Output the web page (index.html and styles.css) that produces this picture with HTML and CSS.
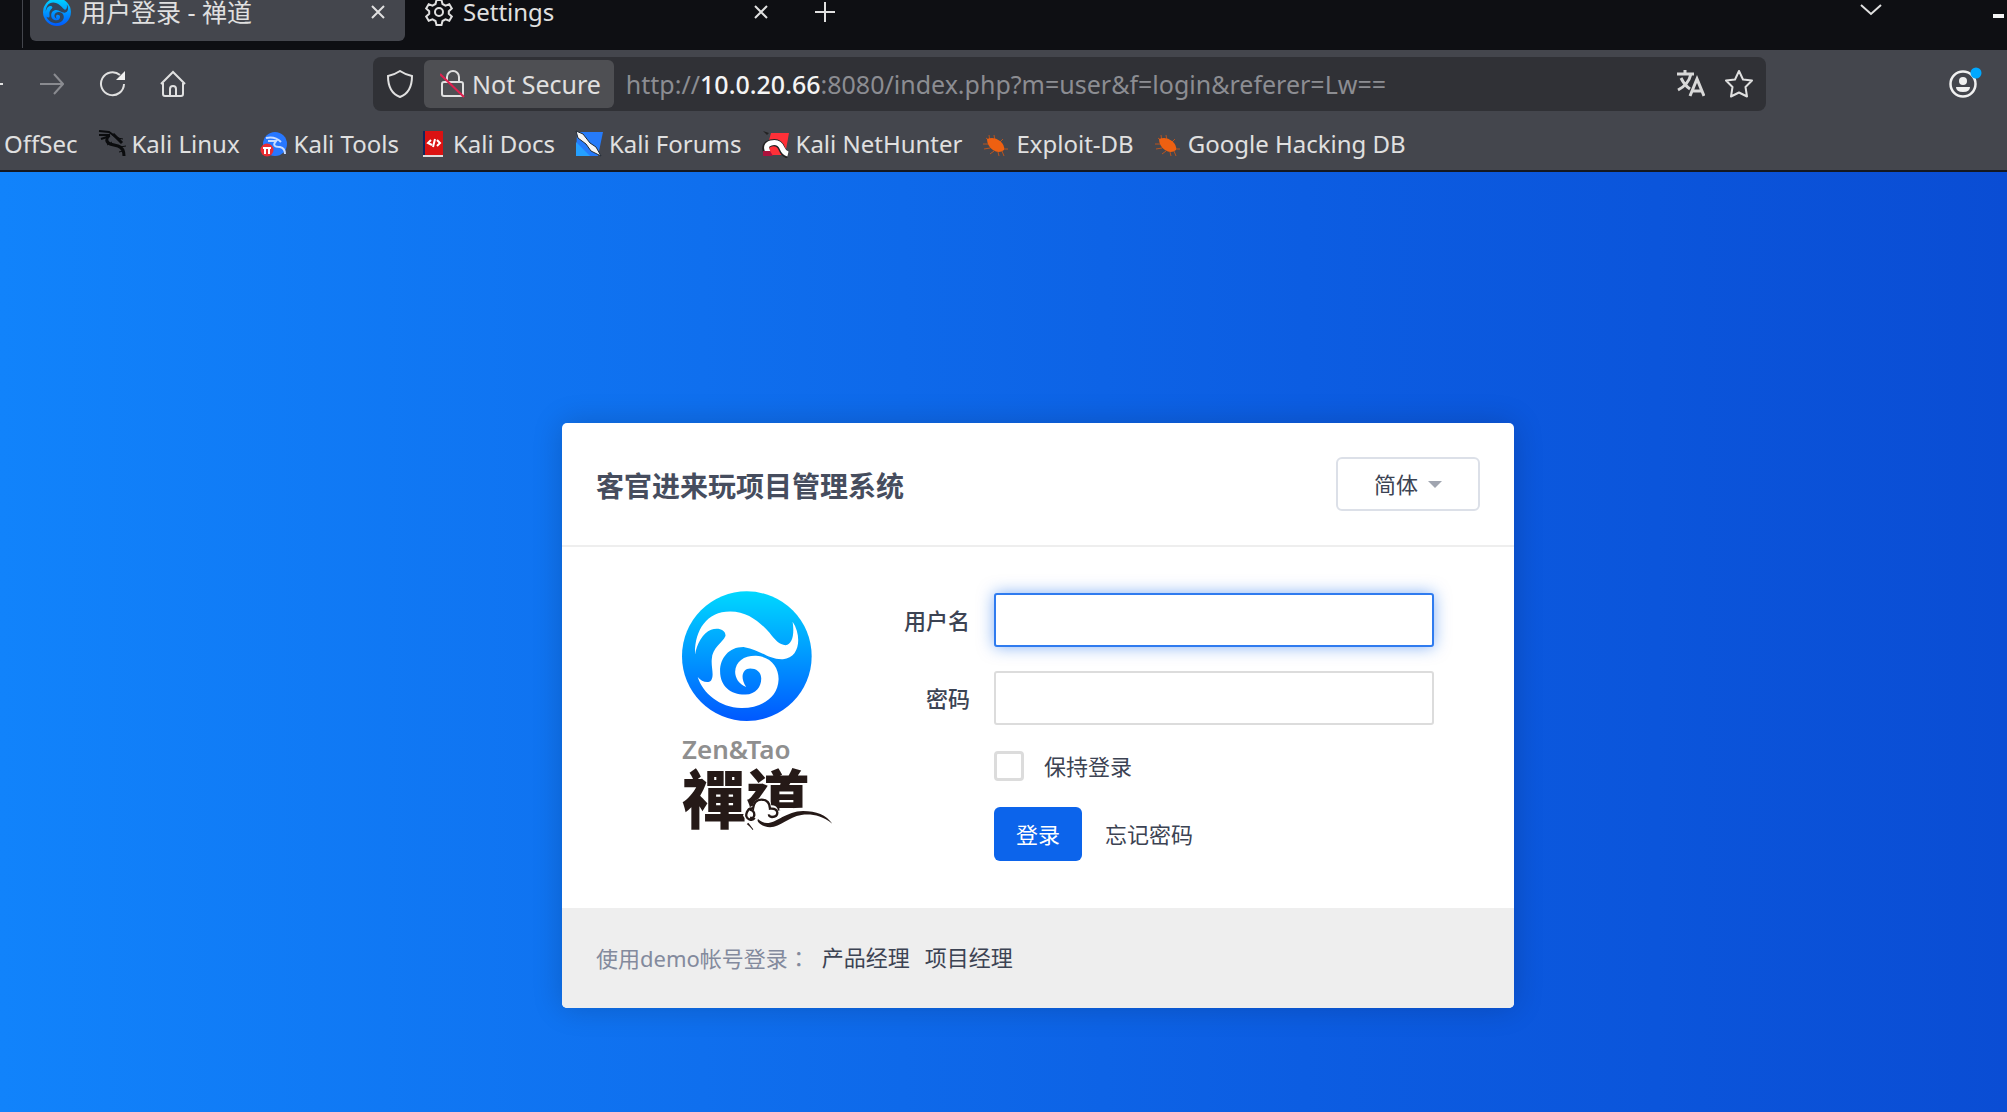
FILE: index.html
```html
<!DOCTYPE html>
<html lang="zh-CN">
<head>
<meta charset="utf-8">
<meta name="viewport" content="width=device-width, initial-scale=1">
<title>用户登录 - 禅道</title>
<link rel="stylesheet" href="styles.css">
</head>
<body>
<svg class="defs" aria-hidden="true">
  <defs>
    <linearGradient id="wave-fill" x1="0" y1="0" x2="0" y2="1">
      <stop offset="0" stop-color="#00d8ff"/>
      <stop offset="1" stop-color="#0058ff"/>
    </linearGradient>
    <path id="wave" d="M107 250C105 180 140 121 212 121C265 121 300 152 330 185C345 205 360 222 378 222C398 220 405 190 399 152C428 195 420 262 370 264C325 266 300 234 255 228C210 226 182 260 182 300C182 345 215 371 258 370C290 368 306 345 305 320C304 302 290 292 272 292C250 292 240 318 260 347C238 340 227 320 227 302C228 270 255 253 290 254C335 256 358 290 357 325C355 380 305 411 245 410C180 408 130 365 115 317C125 330 145 338 155 328C165 312 155 290 157 265C158 230 190 215 198 195C200 175 175 168 155 176C130 185 112 220 107 250Z"/>
    <g id="bug"><path fill="none" stroke="#b9541f" d="M8 12L7 5M13 11l-1-6M17 13l4-4M20 19h6M6 14H1M8 18l-6 1M12 21l-4 3M16 22l1 4M20 21l2 5M4 8l5 4"/><path fill="#ee6011" d="M5 9q7-3 13 2 5 4 4 9-5 4-11 0-6-4-6-11z"/></g>
    <path id="times" d="M1 1L13 13M13 1L1 13"/>
  </defs>
</svg>
<header class="browser">
  <div class="tabs">
    <div class="tab tab-active">
      <svg class="favicon" viewBox="68 60 389 389" aria-hidden="true"><circle cx="262" cy="255" r="194" fill="url(#wave-fill)"/><use href="#wave" fill="#32465c"/></svg>
      <span class="tab-title">用户登录 - 禅道</span>
      <button class="icon-button" aria-label="Close tab"><svg width="14" height="14" class="line"><use href="#times"/></svg></button>
    </div>
    <div class="tab tab-idle">
      <svg class="favicon line" viewBox="0 0 28 28" aria-hidden="true"><circle cx="14" cy="14" r="4"/><path d="M11.5 2h5l1 4 3 1.600 3.800-1.300 2.500 4.200-3 2.800v2.400l3 2.800-2.500 4.200-3.800-1.300-3 1.600-1 4h-5l-1-4-3-1.600-3.800 1.300-2.500-4.200 3-2.800v-2.400l-3-2.800 2.500-4.200 3.800 1.300 3-1.600z"/></svg>
      <span class="tab-title">Settings</span>
      <button class="icon-button" aria-label="Close tab"><svg width="14" height="14" class="line"><use href="#times"/></svg></button>
    </div>
    <button class="icon-button new-tab" aria-label="New tab"><svg width="20" height="20" class="line"><path d="M10 0V20M0 10H20"/></svg></button>
    <button class="icon-button all-tabs" aria-label="List all tabs"><svg width="22" height="12" class="line"><path d="M1 1l10 9 10-9"/></svg></button>
    <button class="icon-button minimize" aria-label="Minimize"><svg width="11" height="4"><path fill="#f4f4f4" d="M0 0h11v4H0z"/></svg></button>
  </div>
  <div class="toolbar">
    <div class="nav">
      <button class="icon-button back" aria-label="Back"><svg width="3" height="28" class="line"><path d="M0 14h3"/></svg></button>
      <button class="icon-button" aria-label="Forward"><svg width="26" height="28" class="line dim"><path d="M2 14H25M16 4l9 10-9 10"/></svg></button>
      <button class="icon-button" aria-label="Reload"><svg width="26" height="28" class="line"><path d="M25 14A11.500 11.500 0 1 1 21 5"/><path fill="#f0f0f0" stroke="none" d="M26 1v9h-9z"/></svg></button>
      <button class="icon-button" aria-label="Home"><svg width="26" height="28" class="line"><path d="M1 14L13 2l12 12M3 13v11q0 2 2 2h16q2 0 2-2V13M10 26v-7q0-3 3-3t3 3v7"/></svg></button>
    </div>
    <div class="urlbar">
      <button class="icon-button" aria-label="Tracking protection"><svg width="26" height="28" class="line"><path d="M13 1q6 4 12 5c0 10-4 18-12 21C5 24 1 16 1 6q6-1 12-5z"/></svg></button>
      <button class="identity">
        <svg width="26" height="28" class="line" aria-hidden="true"><path d="M7 12V7a6 6 0 0 1 12 0v5M5 12h16q2 0 2 2v10q0 2-2 2H4q-2 0-2-2V14q0-2 2-2z"/><path stroke="#e0204f" d="M0 4l24 23"/></svg>
        Not Secure
      </button>
      <div class="address">http://<b>10.0.20.66</b>:8080/index.php?m=user&amp;f=login&amp;referer=Lw==</div>
      <button class="icon-button" aria-label="Translate"><svg width="28" height="28" class="bold-line"><path d="M0 4h17M8 0v4M14 4C12 12 7 17 1 20M4 8c3 6 6 9 9 11M13 26l7-17 7 17M15 21h10"/></svg></button>
      <button class="icon-button" aria-label="Bookmark this page"><svg width="28" height="28" class="line"><path stroke-linejoin="round" d="M14 1l4 8.500 9 1-6.500 6.500 1.500 9.500-8-4-8 4 1.500-9.500L1 10.500l9-1z"/></svg></button>
    </div>
    <button class="icon-button account" aria-label="Account"><svg width="34" height="34"><circle cx="15" cy="17" r="12.500" fill="none" stroke="#f0f0f0" stroke-width="2.500"/><circle cx="15" cy="14" r="4" fill="#f0f0f0"/><path fill="#f0f0f0" d="M8 20h14q0 5-7 5t-7-5z"/><circle cx="28" cy="6" r="5.500" fill="#00a8ff"/></svg></button>
  </div>
  <nav class="bookmarks" aria-label="Bookmarks">
    <a href="#">OffSec</a>
    <a href="#"><svg width="28" height="28"><path fill="none" stroke="#0b0c0e" stroke-width="2" d="M1 1l10 1 11 8M1 5l11 0M3 9l9-3"/><path fill="none" stroke="#0b0c0e" stroke-width="3" d="M11 5q-5 6 1 9l8 2q6 2 6 10M15 4l9 9"/><path fill="none" stroke="#0b0c0e" d="M20 8l5 1M22 17l6-1M21 22l4-1M14 12l-5 3"/></svg>Kali Linux</a>
    <a href="#"><svg width="28" height="28"><circle cx="15" cy="14" r="12" fill="#2777ff"/><path fill="none" stroke="#c9dcff" stroke-width="2" d="M6 8q9-2 15 4M8 11l8 0q-5 6 4 6 5 1 5 7"/><circle cx="7" cy="20" r="6.500" fill="#e92c32"/><path fill="none" stroke="#fff" stroke-width="2" d="M3 18h8M5 18v6M9 18v6"/></svg>Kali Tools</a>
    <a href="#"><svg width="28" height="28"><path fill="#10265c" d="M4 1h3v24H4z"/><path fill="#da1212" d="M6 1h18v24H6z"/><path fill="#ddd" d="M4 25h20v2H4z"/><path fill="none" stroke="#fff" stroke-width="2" d="M12 10l-3 3 4 2M18 10l3 3-3 3M16 9l-2 8"/></svg>Kali Docs</a>
    <a href="#"><svg width="28" height="28"><path fill="#267bfa" d="M2 2h26l-5 24H1z"/><path fill="#25a0ff" d="M1 12l14 14H1z"/><path fill="#f5f5f5" stroke="#222a35" d="M1 1l7 3 7 9 6 4 5 9-10-5-5-7-8-6z"/></svg>Kali Forums</a>
    <a href="#"><svg width="28" height="28"><path fill="#ff3038" d="M9 3h18l-4 22H3z"/><path fill="none" stroke="#222" stroke-width="7" d="M5 23q-4-8 4-10 8-2 11 6 2 5 6 6"/><path fill="none" stroke="#fff" stroke-width="5" d="M6 22q-4-7 3-9 8-2 11 5 2 5 6 6"/><path fill="#aa123c" d="M1 21h7l3 5H1z"/><path fill="#222" d="M1 1l6 2-2 2z"/></svg>Kali NetHunter</a>
    <a href="#"><svg width="28" height="28"><use href="#bug"/></svg>Exploit-DB</a>
    <a href="#"><svg width="28" height="28"><use href="#bug"/></svg>Google Hacking DB</a>
  </nav>
</header>
<main class="page">
  <section class="card">
    <header class="card-header">
      <h1>客官进来玩项目管理系统</h1>
      <button class="language" type="button">简体<span class="caret"></span></button>
    </header>
    <div class="card-body">
      <div class="brand">
        <svg width="130" height="130" viewBox="68 60 389 389" aria-hidden="true"><circle cx="262" cy="255" r="194" fill="url(#wave-fill)"/><use href="#wave" fill="#fff"/></svg>
        <div class="brand-latin">Zen&amp;Tao</div>
        <div class="brand-name" lang="zh-TW">禪道<svg class="cloud" width="90" height="40" viewBox="250 670 270 120" aria-hidden="true"><path fill="#fff" d="M250 738q5-24 28-26q5-26 30-27q26 2 27 22q18 0 20 16q40-12 100-8q35 10 66 26v50H290z"/><g fill="none" stroke="#251917" stroke-width="7"><path d="M285 745q-5 8-16 4q-14-6-7-22q6-14 18-10q3-27 25-27q25 0 26 27q20-2 22 12q0 12-16 13q-10-1-9-8"/><path d="M270 720q14 2 14 16q-2 12-13 8"/></g><path fill="#251917" d="M295 748C335 785 365 725 430 724C470 724 500 736 518 762C485 737 455 732 425 736C380 742 355 784 315 770C300 765 290 755 295 748Z"/></svg></div>
      </div>
      <form class="login">
        <label for="account">用户名</label>
        <input class="field field-current" id="account" type="text" autocomplete="off">
        <label for="password">密码</label>
        <input class="field" id="password" type="password">
        <div class="keep">
          <input id="keep" type="checkbox">
          <label for="keep">保持登录</label>
        </div>
        <div class="actions">
          <button class="submit" type="submit">登录</button>
          <a href="#">忘记密码</a>
        </div>
      </form>
    </div>
    <footer class="card-footer">
      <span class="hint">使用demo帐号登录<span class="colon" lang="zh-TW">：</span></span>
      <a href="#">产品经理</a>
      <a href="#">项目经理</a>
    </footer>
  </section>
</main>
</body>
</html>
```
FILE: styles.css
```css
* { box-sizing: border-box; }

body {
  margin: 0;
  min-height: 100vh;
  display: flex;
  flex-direction: column;
  font: 22px/32px "Noto Sans", "Noto Sans CJK SC", sans-serif;
  color: #3c4353;
}

button, input { font: inherit; color: inherit; }
a { color: inherit; text-decoration: none; }
svg { display: block; flex: none; }
.defs { position: absolute; width: 0; height: 0; }

/* Browser chrome */
.browser {
  background: #44464d;
  color: #e0e0e0;
  border-bottom: 2px solid #141821;
  font-size: 24px;
  white-space: nowrap;
}
.icon-button { display: flex; padding: 0; border: 0; background: none; }
.line { fill: none; stroke: #e0e0e0; stroke-width: 2; }
.bold-line { fill: none; stroke: #d8d8d8; stroke-width: 3; }
.dim { stroke: #8a8b90; }

.tabs {
  display: flex;
  align-items: flex-start;
  height: 50px;
  padding-left: 22px;
  background: #0e0f13;
}
.tabs::before { content: ""; width: 1px; height: 48px; margin-right: 7px; background: #44464d; }
.tab { display: flex; align-items: center; gap: 10px; height: 41px; padding: 0 20px 18px 13px; }
.tab-active { width: 375px; border-radius: 0 0 6px 6px; background: #44464d; font-size: 25px; }
.tab-idle { width: 383px; padding-left: 20px; }
.tab-title { flex: 1; }
.favicon { width: 28px; height: 28px; }
.new-tab { margin: 2px auto 0 27px; }
.all-tabs { margin: 4px 111px 0 0; }
.minimize { margin: 14px 3px 0 0; }

.toolbar { display: flex; align-items: center; height: 68px; font-size: 25px; }
.nav { display: flex; align-items: center; gap: 35px; width: 373px; }
.urlbar {
  flex: 1;
  display: flex;
  align-items: center;
  height: 54px;
  padding: 0 13px 0 14px;
  border-radius: 8px;
  background: #303136;
}
.urlbar .icon-button + .icon-button { margin-left: 20px; }
.identity {
  display: flex;
  align-items: center;
  gap: 6px;
  height: 48px;
  margin: 0 12px 0 11px;
  padding: 0 13px 0 16px;
  border: 0;
  border-radius: 6px;
  background: #4e4f53;
}
.address { flex: 1; color: #8c8d92; }
.address b { font-weight: 500; color: #f4f4f4; }
.account { margin: 0 25px 0 182px; }

.bookmarks { display: flex; align-items: center; gap: 20px; height: 52px; padding-left: 4px; }
.bookmarks a { display: flex; align-items: center; gap: 6px; }

.page {
  flex: 1;
  padding: 251px 0 104px 69px;
  background: linear-gradient(90deg, #1183fb, #0f6fee 35%, #0c5de2 65%, #0a4dd4);
}
.card {
  width: 952px;
  margin: 0 auto;
  border-radius: 5px;
  overflow: hidden;
  background: #fff;
  box-shadow: 0 0 30px rgba(0, 0, 0, .18);
}
.card-header {
  display: flex;
  align-items: center;
  justify-content: space-between;
  height: 124px;
  padding: 0 34px;
  border-bottom: 2px solid #eee;
}
h1 { margin: 0; padding-top: 3px; font-size: 28px; font-weight: 700; line-height: 40px; color: #464d5e; }
.language {
  display: flex;
  align-items: center;
  justify-content: center;
  gap: 10px;
  width: 144px;
  height: 54px;
  border: 2px solid #dce0e8;
  border-radius: 6px;
  background: #fff;
}
.caret { border: 7px solid transparent; border-top-color: #a0a5b0; border-bottom: 0; }

.card-body { display: flex; justify-content: space-between; padding: 44px 80px 47px 120px; }
.brand-latin { margin-top: 14px; font-size: 26px; font-weight: 600; line-height: 28px; color: #8f8f8f; }
.brand-name {
  position: relative;
  width: 150px;
  font: 900 64px/64px "Noto Sans CJK TC", sans-serif;
  color: #251917;
}
.cloud { position: absolute; left: 61px; top: 30px; }

.login {
  display: grid;
  grid-template-columns: auto 440px;
  gap: 24px;
  align-items: center;
  align-content: start;
  margin-top: 2px;
}
.login > label { text-align: right; font-weight: 500; }
.field {
  width: 100%;
  height: 54px;
  padding: 0 16px;
  border: 2px solid #dcdcdc;
  border-radius: 3px;
  background: #fff;
}
.field-current, .field:focus {
  outline: 0;
  border-color: #2f7bef;
  box-shadow: 0 0 16px rgba(12, 100, 235, .5);
}
.keep, .actions { grid-column: 2; display: flex; align-items: center; }
.keep { gap: 20px; height: 34px; }
.keep input {
  appearance: none;
  width: 30px;
  height: 30px;
  margin: 0;
  border: 3px solid #dcdcdc;
  border-radius: 4px;
}
.actions { gap: 23px; }
.submit {
  width: 88px;
  height: 54px;
  padding: 0;
  border: 0;
  border-radius: 6px;
  background: #0c64eb;
  color: #fff;
}

.card-footer { display: flex; gap: 12px; align-items: center; height: 100px; padding: 0 34px 2px; background: #eee; }
.card-footer a + a { margin-left: 3px; }
.hint { color: #838a9d; }
.colon { font-family: "Noto Sans CJK TC", sans-serif; }
```
